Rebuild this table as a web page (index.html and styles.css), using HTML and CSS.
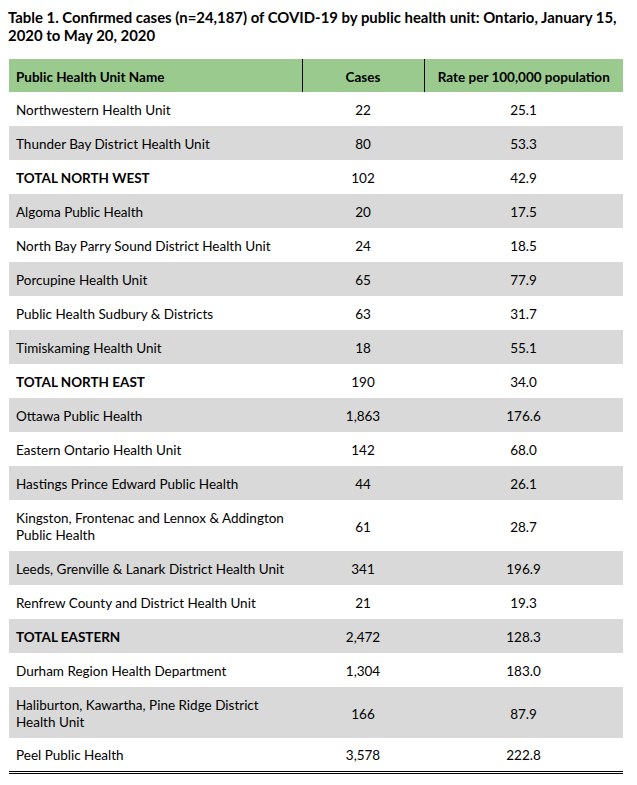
FILE: index.html
```html
<!DOCTYPE html>
<html>
<head>
<meta charset="utf-8">
<link rel="stylesheet" href="styles.css">
</head>
<body>
<h1 class="title">Table 1. Confirmed cases (n=24,187) of COVID-19 by public health unit: Ontario, January 15, 2020 to May 20, 2020</h1>
<table class="data">
<thead>
<tr><th class="name">Public Health Unit Name</th><th class="num sep">Cases</th><th class="num sep">Rate per 100,000 population</th></tr>
</thead>
<tbody>
<tr><td class="name">Northwestern Health Unit</td><td class="num">22</td><td class="num">25.1</td></tr>
<tr><td class="name">Thunder Bay District Health Unit</td><td class="num">80</td><td class="num">53.3</td></tr>
<tr class="total"><td class="name">TOTAL NORTH WEST</td><td class="num">102</td><td class="num">42.9</td></tr>
<tr><td class="name">Algoma Public Health</td><td class="num">20</td><td class="num">17.5</td></tr>
<tr><td class="name">North Bay Parry Sound District Health Unit</td><td class="num">24</td><td class="num">18.5</td></tr>
<tr><td class="name">Porcupine Health Unit</td><td class="num">65</td><td class="num">77.9</td></tr>
<tr><td class="name">Public Health Sudbury &amp; Districts</td><td class="num">63</td><td class="num">31.7</td></tr>
<tr><td class="name">Timiskaming Health Unit</td><td class="num">18</td><td class="num">55.1</td></tr>
<tr class="total"><td class="name">TOTAL NORTH EAST</td><td class="num">190</td><td class="num">34.0</td></tr>
<tr><td class="name">Ottawa Public Health</td><td class="num">1,863</td><td class="num">176.6</td></tr>
<tr><td class="name">Eastern Ontario Health Unit</td><td class="num">142</td><td class="num">68.0</td></tr>
<tr><td class="name">Hastings Prince Edward Public Health</td><td class="num">44</td><td class="num">26.1</td></tr>
<tr class="two"><td class="name">Kingston, Frontenac and Lennox &amp; Addington<br>Public Health</td><td class="num">61</td><td class="num">28.7</td></tr>
<tr><td class="name">Leeds, Grenville &amp; Lanark District Health Unit</td><td class="num">341</td><td class="num">196.9</td></tr>
<tr><td class="name">Renfrew County and District Health Unit</td><td class="num">21</td><td class="num">19.3</td></tr>
<tr class="total"><td class="name">TOTAL EASTERN</td><td class="num">2,472</td><td class="num">128.3</td></tr>
<tr><td class="name">Durham Region Health Department</td><td class="num">1,304</td><td class="num">183.0</td></tr>
<tr class="two"><td class="name">Haliburton, Kawartha, Pine Ridge District<br>Health Unit</td><td class="num">166</td><td class="num">87.9</td></tr>
<tr><td class="name">Peel Public Health</td><td class="num">3,578</td><td class="num">222.8</td></tr>
</tbody>
</table>
</body>
</html>
```

FILE: styles.css
```css
html, body {
  margin: 0;
  padding: 0;
  background: #ffffff;
}
body {
  font-family: Lato, "Open Sans", sans-serif;
  color: #000000;
  padding: 8px 0 0 8px;
}
.title {
  margin: 0;
  width: 620px;
  font-size: 14.9px;
  font-weight: 700;
  line-height: 18px;
}
.data {
  margin: 15px 0 0 1px;
  border-collapse: collapse;
  width: 614px;
  table-layout: fixed;
  font-size: 13.5px;
  border-bottom: 3px double #000;
}
.data th, .data td {
  padding: 3px 7px 0;
  height: 34px;
  line-height: 17px;
  vertical-align: middle;
  box-sizing: border-box;
}
.data th {
  height: 33px;
  background: #9aca8e;
  font-weight: 700;
}
.data th.name { width: 293px; }
.data th:nth-child(2) { width: 122px; }
.data th.sep { border-left: 1px solid #000; }
.data .name { text-align: left; }
.data .num { text-align: center; }
.data tbody tr:nth-child(even) td { background: #d9d9d9; }
.data tr.two td { height: 51px; }
.data tr.total td.name { font-weight: 700; }
```
